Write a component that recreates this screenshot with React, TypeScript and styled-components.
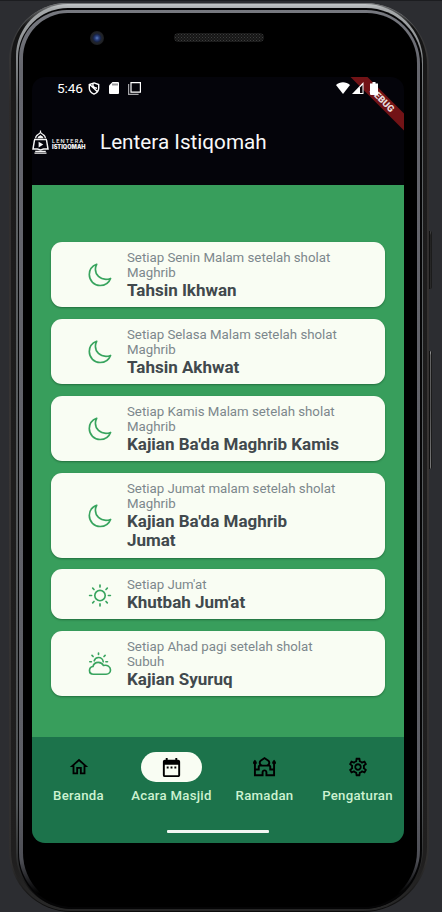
import React from 'react';
import styled, { createGlobalStyle } from 'styled-components';
import { MdOutlineHome, MdDateRange, MdOutlineMosque, MdOutlineSettings } from 'react-icons/md';

const GlobalStyle = createGlobalStyle`
  * { box-sizing: border-box; }
  html, body { margin: 0; padding: 0; background: #2c2d31; overflow: hidden; }
  body { font-family: Roboto, "Noto Sans", sans-serif; }
`;

const Stage = styled.div`
  width: 442px;
  height: 912px;
  display: flex;
  align-items: flex-start;
  padding: 2px 0 0 9px;
  overflow: hidden;
  background: #2c2d31;
  border-top: 1px solid #1c1d20;
`;

const Chassis = styled.div`
  width: 420px;
  height: 909px;
  flex: none;
  border-radius: 58px 64px 66px 62px;
  padding: 0 2px 1px 2px;
  background: linear-gradient(180deg, #85878a 0, #3b3b3c 30px, #2d2b2b 100px, #393635 450px, #302f2f 860px, #0c0c0c 908px);
`;

const Groove = styled.div`
  height: 100%;
  border-radius: 56px 62px 64px 60px;
  padding: 1px 4px 2px 5px;
  background: linear-gradient(180deg, #77797b 0, #131313 24px, #1c1b1b 100px, #201f1f 860px, #272727 900px);
`;

const Rim = styled.div`
  height: 100%;
  border-radius: 52px 58px 60px 56px;
  padding: 4px 1px 0 2px;
  background: linear-gradient(180deg, #c3c6c8 0, #a5a8aa 5px, #96999b 30px, #5e6264 100px, #505456 800px, #252525 870px, #080808 895px);
`;

const Seam = styled.div`
  height: 100%;
  border-radius: 50px 56px 59px 55px;
  padding: 2px 2px 2px 1px;
  background: #050506;
`;

const Bevel = styled.div`
  height: 100%;
  border-radius: 48px 54px 57px 54px;
  padding: 3px 3px 0 4px;
  background: linear-gradient(180deg, #777980 0, #65666d 60px, #5d5e65 780px, #4d4e55 850px, #000 884px);
`;

const Glass = styled.div`
  height: 100%;
  border-radius: 45px 50px 56px 54px;
  background: #000;
  display: flex;
  flex-direction: column;
  padding-left: 9px;
`;

const Earpiece = styled.div`
  height: 64px;
  flex: none;
  display: flex;
  align-items: flex-start;
`;

const Camera = styled.div`
  width: 14px;
  height: 14px;
  margin: 18px 0 0 58px;
  border-radius: 50%;
  background: radial-gradient(circle, #5d7dbd 0, #293f7c 2px, #17213f 4px, #22252a 5px, #1c1d20 7px);
`;

const Speaker = styled.div`
  width: 90px;
  height: 9px;
  margin: 20px 0 0 70px;
  border-radius: 5px;
  background-color: #161616;
  background-image: radial-gradient(circle, #3d3e3e 0.7px, transparent 1px), radial-gradient(circle, #353636 0.7px, transparent 1px);
  background-size: 3px 3px, 3px 3px;
  background-position: 0 0, 1.5px 1.5px;
`;

const Screen = styled.div`
  position: relative;
  width: 372px;
  height: 766px;
  flex: none;
  border-radius: 13px;
  overflow: hidden;
  display: flex;
  flex-direction: column;
  background: #04040a;
`;

const StatusBar = styled.div`
  position: relative;
  z-index: 2;
  height: 22px;
  flex: none;
  display: flex;
  align-items: center;
  padding: 0 26px 0 25px;
  color: #fff;
  font-size: 13.6px;
  line-height: 16px;
  letter-spacing: -0.1px;
`;

const StatusIcons = styled.div<{ $gap: number; $left?: string }>`
  display: flex;
  align-items: center;
  gap: ${(p) => p.$gap}px;
  margin-left: ${(p) => p.$left ?? 'auto'};
`;

const Ribbon = styled.div`
  position: absolute;
  z-index: 1;
  width: 100px;
  height: 12px;
  top: 16.5px;
  right: -27.5px;
  transform: rotate(45deg);
  background: #721316;
  color: #e8dede;
  font-size: 9.4px;
  font-weight: 900;
  line-height: 12px;
  text-align: center;
`;

const AppBar = styled.header`
  height: 86px;
  flex: none;
  display: flex;
  align-items: center;
  gap: 14px;
  padding-bottom: 1px;
`;

const Brand = styled.div`
  display: flex;
  align-items: center;
  gap: 3px;
  width: 54px;
`;

const BrandName = styled.div`
  display: flex;
  flex-direction: column;
  color: #f0f0f0;
  padding-top: 5px;
`;

const BrandLine = styled.span<{ $bold?: boolean }>`
  font-family: Inter, sans-serif;
  font-size: ${(p) => (p.$bold ? 5.6 : 5.4)}px;
  line-height: 6px;
  font-weight: ${(p) => (p.$bold ? 900 : 600)};
  letter-spacing: ${(p) => (p.$bold ? 0 : 1.1)}px;
  white-space: nowrap;
`;

const Title = styled.h1`
  margin: 0;
  color: #f8f8f8;
  font-size: 20.7px;
  font-weight: 400;
  line-height: 26px;
  white-space: nowrap;
`;

const Content = styled.main`
  height: 552px;
  flex: none;
  display: flex;
  flex-direction: column;
  gap: 11.6px;
  padding: 57px 19px 0;
  background: #389e5c;
`;

const Card = styled.article`
  display: flex;
  align-items: center;
  gap: 14px;
  padding: 8px 0 7.4px 36px;
  border-radius: 11px;
  background: #f9fdf3;
  box-shadow: 0 1px 2px rgba(0, 40, 15, 0.4);
`;

const CardIcon = styled.svg`
  width: 26px;
  height: 26px;
  flex: none;
  fill: none;
  stroke: #38a45e;
  stroke-width: 1.65;
  stroke-linecap: round;
  stroke-linejoin: round;
`;

const CardText = styled.div`
  width: 216px;
`;

const Schedule = styled.p`
  margin: 0;
  color: #7c878c;
  font-size: 13.25px;
  line-height: 15.3px;
`;

const EventName = styled.h2`
  margin: 0;
  color: #41494d;
  font-size: 17px;
  font-weight: 700;
  line-height: 19.4px;
`;

const NavBar = styled.nav`
  flex: 1;
  display: flex;
  flex-direction: column;
  background: #1c734b;
`;

const Tabs = styled.div`
  display: grid;
  grid-template-columns: repeat(4, 93px);
  padding-top: 15px;
`;

const Tab = styled.div`
  display: flex;
  flex-direction: column;
  align-items: center;
  gap: 5px;
  color: #cdf2d1;
  font-size: 13.2px;
  font-weight: 500;
  line-height: 18px;
  letter-spacing: 0.28px;
  white-space: nowrap;
`;

const Pill = styled.span<{ $active?: boolean }>`
  display: flex;
  align-items: center;
  justify-content: center;
  width: 61px;
  height: 30px;
  border-radius: 15px;
  color: #000;
  background: ${(p) => (p.$active ? '#f9fdf3' : 'transparent')};
`;

const HomeHandle = styled.div`
  width: 102px;
  height: 3px;
  margin: 25px auto 0;
  border-radius: 1px;
  background: #f2f7f3;
`;

const SideButtons = styled.div`
  display: flex;
  flex-direction: column;
  gap: 62px;
  padding-top: 228px;
`;

const SideButton = styled.div<{ $height: number; $lit?: boolean }>`
  width: 3px;
  height: ${(p) => p.$height}px;
  border-radius: 0 2px 2px 0;
  border-left: 1px solid #111;
  border-right: 1px solid #1b1b1b;
  background: ${(p) => (p.$lit ? 'linear-gradient(#bbb 0, #666 4px, #555 50%, #777)' : 'linear-gradient(#555 0, #222 4px, #2a2a2a)')};
`;

const LogoMark = () => (
  <svg width="17" height="24" viewBox="0 0 17 24" fill="none" stroke="#f4f4f4" strokeWidth="1.2">
    <path d="M8.5 0.6v1.7M3.8 8.3C2.8 5.2 7 4.7 8.5 2.2c1.5 2.5 5.7 3 4.700 6.100" />
    <path d="M5.6 8.2c0-2 2-2 2.9-3.2.9 1.2 2.9 1.2 2.9 3.2z" fill="#f4f4f4" stroke="none" />
    <path d="M2 9.5h13M2.5 10L1 19h4.4l3.1.9 3.1-.9H16L14.500 10" strokeWidth="1.5" />
    <path d="M6.600 11.700v5.800l4.700-2.900z" fill="#f4f4f4" stroke="none" />
    <path d="M3.200 21.300h10.600M2.500 23.200h12" strokeWidth="1.300" />
  </svg>
);

const Moon = () => (
  <CardIcon viewBox="0 0 26 26">
    <path d="M9.700 2.300C5.200 4 2.300 7.800 2.300 12.600c0 6 4.800 10.900 10.800 10.900 4.900 0 8.900-2.800 10.500-7.100-1.600.6-3.100.9-4.700.9-5.800 0-10.500-4.200-10.500-10 0-1.800.5-3.500 1.300-5z" />
  </CardIcon>
);

const Sun = () => (
  <CardIcon viewBox="0 0 26 26">
    <circle cx="13" cy="13.500" r="5.200" />
    <path d="M13 3.100v2M13 21.900v2M2.600 13.500h2M21.400 13.500h2M5.700 6.200l1.300 1.300M19 19.500l1.300 1.300M5.700 20.800l1.300-1.300M19 7.500l1.300-1.300" />
  </CardIcon>
);

const SunCloud = () => (
  <CardIcon viewBox="0 0 26 26">
    <path d="M6.500 23.200c-2.300 0-4-1.600-4-3.800 0-2 1.400-3.600 3.500-3.900.5-2.500 2.600-4.200 5.300-4.200 2.300 0 4.200 1.200 5.100 3.200 3.800-1 7.100 1.200 7.100 4.400 0 2.500-1.900 4.300-4.400 4.300z" />
    <path d="M7.200 9.800c.6-2.100 2.200-3.300 4.300-3.300 2.600 0 4.600 1.900 4.700 4.300M11.500 2v1.500M5 4.400l1.100 1.100M18.100 4.400L17 5.500M2.800 10.700h1.600M18.900 10.700h1.600" />
  </CardIcon>
);

const ICONS = { moon: Moon, sun: Sun, cloud: SunCloud };

const EVENTS: { icon: keyof typeof ICONS; when: string; name: React.ReactNode }[] = [
  { icon: 'moon', when: 'Setiap Senin Malam setelah sholat Maghrib', name: 'Tahsin Ikhwan' },
  { icon: 'moon', when: 'Setiap Selasa Malam setelah sholat Maghrib', name: 'Tahsin Akhwat' },
  { icon: 'moon', when: 'Setiap Kamis Malam setelah sholat Maghrib', name: "Kajian Ba'da Maghrib Kamis" },
  { icon: 'moon', when: 'Setiap Jumat malam setelah sholat Maghrib', name: <>Kajian Ba'da Maghrib<br />Jumat</> },
  { icon: 'sun', when: "Setiap Jum'at", name: "Khutbah Jum'at" },
  { icon: 'cloud', when: 'Setiap Ahad pagi setelah sholat Subuh', name: 'Kajian Syuruq' },
];

const TABS = [
  { label: 'Beranda', Icon: MdOutlineHome, size: 22 },
  { label: 'Acara Masjid', Icon: MdDateRange, size: 23, active: true },
  { label: 'Ramadan', Icon: MdOutlineMosque, size: 23 },
  { label: 'Pengaturan', Icon: MdOutlineSettings, size: 22 },
];

export default function App() {
  return (
    <>
      <GlobalStyle />
      <Stage>
        <Chassis><Groove><Rim><Seam><Bevel>
          <Glass>
            <Earpiece>
              <Camera />
              <Speaker />
            </Earpiece>
            <Screen>
              <StatusBar>
                5:46
                <StatusIcons $gap={9} $left="5px">
                  <svg width="12" height="13" viewBox="0 0 12 13" fill="none" stroke="#fff" strokeWidth="1.400">
                    <path d="M6 .9l4.700 1.700v3.500c0 2.800-2 5-4.700 6-2.700-1-4.700-3.200-4.700-6V2.600zM2 2.700l8 7.500M5 1.500c-.5 3 .500 4.200 4 4.700" />
                  </svg>
                  <svg width="10" height="12" viewBox="0 0 10 12">
                    <path d="M3.500 0H9q1 0 1 1v10q0 1-1 1H1q-1 0-1-1V3.500z" fill="#fff" />
                    <path d="M4 1.500v2M6 1.500v2M8 1.500v2" stroke="#04040a" strokeWidth=".8" />
                  </svg>
                  <svg width="13" height="13" viewBox="0 0 13 13" fill="none" stroke="#fff">
                    <path d="M3 .6h9.400v9.600H3z" strokeWidth="1.200" />
                    <path d="M.6 2v10.400h10" stroke="#a5a5a8" strokeWidth="1.200" />
                  </svg>
                </StatusIcons>
                <StatusIcons $gap={2}>
                  <svg width="14" height="12" viewBox="0 0 14 12"><path d="M0 3C4-.800 10-.800 14 3L7 12z" fill="#fff" /></svg>
                  <svg width="12" height="12" viewBox="0 0 12 12"><path d="M0 12L11.500 0v12z" fill="#fff" /><path d="M8 5.500l2.500-2.600v8H8z" fill="#0b0509" /></svg>
                  <svg width="12" height="13" viewBox="0 0 12 13"><path d="M6.500 0h3v1.500H12V12q0 1-1 1H5q-1 0-1-1V1.500h2.500z" fill="#fff" /></svg>
                </StatusIcons>
              </StatusBar>
              <Ribbon>DEBUG</Ribbon>
              <AppBar>
                <Brand>
                  <LogoMark />
                  <BrandName>
                    <BrandLine>LENTERA</BrandLine>
                    <BrandLine $bold>ISTIQOMAH</BrandLine>
                  </BrandName>
                </Brand>
                <Title>Lentera Istiqomah</Title>
              </AppBar>
              <Content>
                {EVENTS.map((event) => {
                  const Icon = ICONS[event.icon];
                  return (
                    <Card key={event.when}>
                      <Icon />
                      <CardText>
                        <Schedule>{event.when}</Schedule>
                        <EventName>{event.name}</EventName>
                      </CardText>
                    </Card>
                  );
                })}
              </Content>
              <NavBar>
                <Tabs>
                  {TABS.map(({ label, Icon, size, active }) => (
                    <Tab key={label}>
                      <Pill $active={active}><Icon size={size} /></Pill>
                      {label}
                    </Tab>
                  ))}
                </Tabs>
                <HomeHandle />
              </NavBar>
            </Screen>
          </Glass>
        </Bevel></Seam></Rim></Groove></Chassis>
        <SideButtons>
          <SideButton $height={58} />
          <SideButton $height={118} $lit />
        </SideButtons>
      </Stage>
    </>
  );
}
